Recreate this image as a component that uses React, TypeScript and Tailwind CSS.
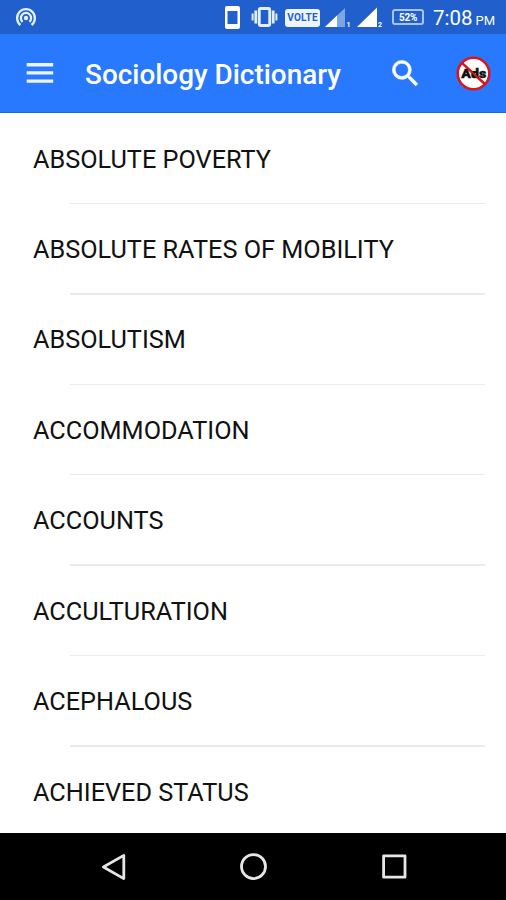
import React from 'react'

const terms = [
    'ABSOLUTE POVERTY',
    'ABSOLUTE RATES OF MOBILITY',
    'ABSOLUTISM',
    'ACCOMMODATION',
    'ACCOUNTS',
    'ACCULTURATION',
    'ACEPHALOUS',
    'ACHIEVED STATUS',
]

const HotspotIcon = () => (
    <svg width="22" height="20" viewBox="0 0 22 20" fill="none" stroke="#e4effc" strokeWidth="2.3">
        <path d="M5.4 18a8.9 8.9 0 1 1 11.2 0" />
        <path d="M7.6 14.8a5.1 5.1 0 1 1 6.8 0" />
        <circle cx="11" cy="11" r="2.2" fill="#e4effc" stroke="none" />
    </svg>
)

const PhoneIcon = () => (
    <svg width="15" height="23" viewBox="0 0 15 23">
        <path fill="#fff" fillRule="evenodd" d="M2 0h11a2 2 0 0 1 2 2v19a2 2 0 0 1-2 2H2a2 2 0 0 1-2-2V2a2 2 0 0 1 2-2zM2.5 5v13h10V5z" />
    </svg>
)

const VibrateIcon = () => (
    <svg width="27" height="20" viewBox="0 0 27 20" fill="none" stroke="#e4effc">
        <rect x="8.3" y="1.5" width="10.4" height="17" rx="1" strokeWidth="2.8" />
        <path d="M4.8 3.5v13M22.2 3.5v13" strokeWidth="2.8" />
        <path d="M1.6 6.5v7M25.4 6.5v7" strokeWidth="2" />
    </svg>
)

const StatusBar = () => (
    <div className="flex h-[34px] items-center bg-[#2160cc] pl-[15px] text-white">
        <HotspotIcon />
        <div className="ml-[188px]"><PhoneIcon /></div>
        <div className="ml-[11px]"><VibrateIcon /></div>
        <div className="ml-[7px] mt-px flex h-[18px] w-[35px] items-center justify-center rounded-[3px] bg-[#eef4fd] text-[10px] font-bold tracking-[0.2px] text-[#2160cc]">VOLTE</div>
        <svg className="ml-[5px]" width="27" height="28" viewBox="0 -4 27 28">
            <path d="M20 1v19H0z" fill="#7da6e8" />
            <path d="M12 8.6V20H0z" fill="#fff" />
            <text x="21.5" y="20" fontSize="7" fontWeight="700" fill="#fff">1</text>
        </svg>
        <svg className="ml-[5px]" width="28" height="28" viewBox="0 -4 28 28">
            <path d="M20 .5V20H0z" fill="#fff" />
            <text x="21" y="20" fontSize="7" fontWeight="700" fill="#fff">2</text>
        </svg>
        <div className="ml-[7px] flex h-[16px] w-[32px] items-center justify-center rounded-[3px] border-2 border-[#a9c4f0] text-[10px] font-bold tracking-[-0.3px]">52%</div>
        <div className="ml-[9px] mt-[3px] flex items-baseline whitespace-nowrap">
            <span className="text-[20.5px] leading-none">7:08</span>
            <span className="ml-[3px] text-[13px] leading-none">PM</span>
        </div>
    </div>
)

const NoAdsIcon = () => (
    <svg width="35" height="35" viewBox="0 0 35 35">
        <circle cx="17.5" cy="17.5" r="15.8" fill="#fff" stroke="#d9161f" strokeWidth="2.6" />
        <path d="M6.4 7.4l22.2 20.4" stroke="#d9161f" strokeWidth="2.6" />
        <text x="17.8" y="22" textAnchor="middle" textLength="25" lengthAdjust="spacingAndGlyphs" fontSize="12.5" fontWeight="900" fill="#111" stroke="#111" strokeWidth="0.4">Ads</text>
        <path d="M12 12.6l12 11" stroke="#d9161f" strokeWidth="1.6" />
    </svg>
)

const AppBar = () => (
    <header className="flex h-[79px] items-center border-b border-[#2166d8] bg-[#2979ff] pl-[26px] pr-[15px] text-white">
        <svg width="28" height="20" viewBox="0 0 28 20">
            <path fill="#eef4ff" d="M.7 0h26.5v3.4H.7zM.7 8.2h26.5v3.4H.7zM.7 16.4h26.5v3.4H.7z" />
        </svg>
        <h1 className="ml-[31px] mt-[3px] whitespace-nowrap text-[27.9px] font-medium leading-none">Sociology Dictionary</h1>
        <svg className="ml-auto" width="35" height="35" viewBox="0 0 24 24" fill="#fff" stroke="#fff" strokeWidth="0.4">
            <path d="M15.5 14h-.79l-.28-.27A6.471 6.471 0 0 0 16 9.5 6.5 6.5 0 1 0 9.5 16c1.61 0 3.09-.59 4.23-1.57l.27.28v.79l5 4.99L20.49 19l-4.99-5zm-6 0C7.01 14 5 11.99 5 9.5S7.01 5 9.5 5 14 7.01 14 9.5 11.99 14 9.5 14z" />
        </svg>
        <div className="ml-[33px]"><NoAdsIcon /></div>
    </header>
)

const NavBar = () => (
    <nav className="flex h-[67px] items-center bg-black pl-[101px]">
        <svg width="25" height="28" viewBox="0 0 25 28" fill="none" stroke="#e6e6e6" strokeWidth="2.8" strokeLinejoin="round">
            <path d="M22.8 2.4v23.2L2.4 14z" />
        </svg>
        <svg className="ml-[114px]" width="28" height="28" viewBox="0 0 28 28" fill="none" stroke="#e6e6e6" strokeWidth="2.8">
            <circle cx="13.5" cy="13.6" r="12" />
        </svg>
        <svg className="ml-[114px]" width="25" height="25" viewBox="0 0 25 25" fill="none" stroke="#e6e6e6" strokeWidth="2.8" strokeLinejoin="round">
            <rect x="1.6" y="1.8" width="21.4" height="21.4" />
        </svg>
    </nav>
)

const App: React.FC = () => {
    return (
        <div className="flex h-[900px] w-[506px] flex-col overflow-hidden bg-white font-['Roboto',sans-serif]">
            <StatusBar />
            <AppBar />
            <ul className="min-h-0 flex-1 overflow-hidden pt-[0.7px]">
                {terms.map((term, i) => (
                    <li key={term} className="flex h-[90.45px] flex-col">
                        <div className="flex flex-1 items-center pl-[33px] pt-[2.8px] text-[25.25px] text-[#111]">{term}</div>
                        {i < terms.length - 1 && <div className="ml-[70px] mr-[21px] h-[1.5px] bg-[#ebebeb]" />}
                    </li>
                ))}
            </ul>
            <NavBar />
        </div>
    )
}

export default App
